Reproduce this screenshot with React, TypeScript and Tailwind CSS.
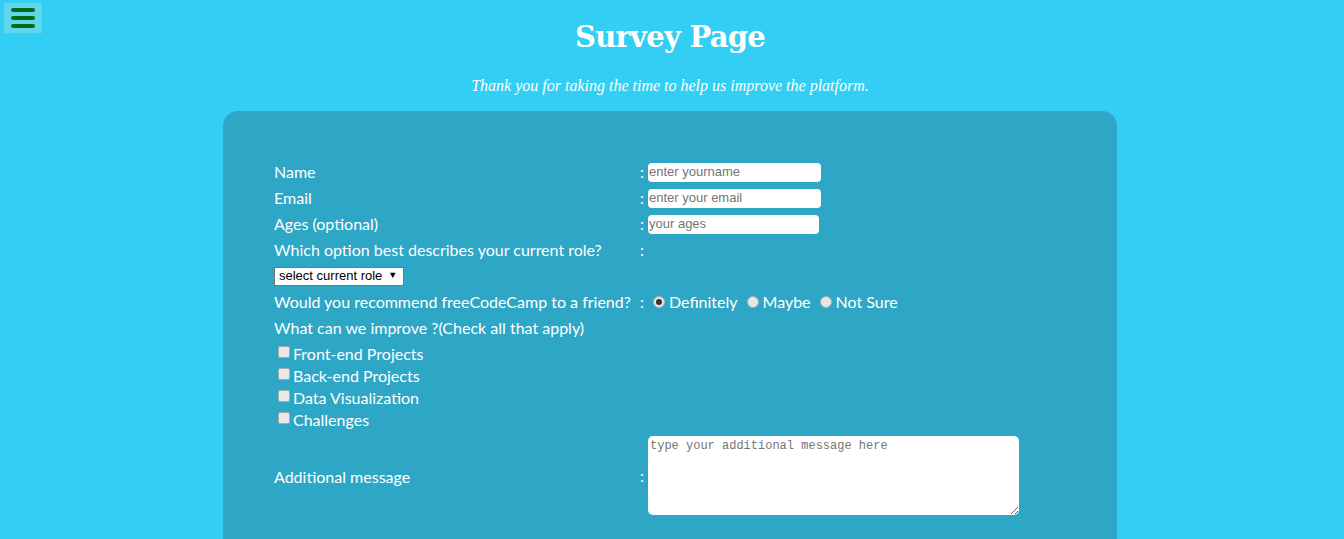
import React from "react";

const Row = ({ label, children }: { label: string; children?: React.ReactNode }) => (
  <div className="flex items-center h-[26px]">
    <div className="w-[366px] shrink-0">{label}</div>
    <span className="w-[8px] shrink-0">:</span>
    {children}
  </div>
);

export default function App() {
  return (
    <div className="min-h-[539px] bg-[#33cef3] text-white font-['Lato',sans-serif] text-[16px] overflow-hidden relative pr-[4px]">
      {/* menu button */}
      <button className="absolute left-[4px] top-[3px] w-[38px] h-[30px] bg-[#5fd6ed] flex flex-col items-center justify-center gap-[4px]">
        <span className="block w-[24px] h-[4px] rounded-full bg-[#066a17]" />
        <span className="block w-[24px] h-[4px] rounded-full bg-[#066a17]" />
        <span className="block w-[24px] h-[4px] rounded-full bg-[#066a17]" />
      </button>

      <h1 className="pt-[18px] text-center text-[29px] leading-[38px] font-bold font-['DejaVu_Serif',serif] tracking-tight">
        Survey Page
      </h1>
      <p className="mt-[20px] text-center italic text-[16px] leading-[20px] font-['Liberation_Serif',serif]">
        Thank you for taking the time to help us improve the platform.
      </p>

      <form className="mx-auto mt-[15px] w-[894px] rounded-t-[15px] bg-[#2ea6c6] pl-[51px] pt-[48px] pb-[30px]">
        <Row label="Name">
          <input
            placeholder="enter yourname"
            className="w-[173px] h-[19px] bg-white rounded-[4px] px-[1px] text-[13px] text-black font-['Liberation_Sans',sans-serif] placeholder:text-[#757575] outline-none"
          />
        </Row>
        <Row label="Email">
          <input
            placeholder="enter your email"
            className="w-[173px] h-[19px] bg-white rounded-[4px] px-[1px] text-[13px] text-black font-['Liberation_Sans',sans-serif] placeholder:text-[#757575] outline-none"
          />
        </Row>
        <Row label="Ages (optional)">
          <input
            placeholder="your ages"
            className="w-[171px] h-[19px] bg-white rounded-[4px] px-[1px] text-[13px] text-black font-['Liberation_Sans',sans-serif] placeholder:text-[#757575] outline-none"
          />
        </Row>
        <Row label="Which option best describes your current role?" />
        <div className="flex items-center h-[26px]">
          <div className="w-[130px] h-[19px] bg-white border border-[#767676] text-black text-[13px] font-['Liberation_Sans',sans-serif] flex items-center pl-[4px] gap-[6px]">
            select current role <span className="text-[9px]">▼</span>
          </div>
        </div>
        <Row label="Would you recommend freeCodeCamp to a friend?">
          <div className="flex items-center ml-[5px]">
            <span className="w-[12px] h-[12px] rounded-full bg-[#e6e6e6] border border-[#adadad] flex items-center justify-center">
              <span className="w-[6px] h-[6px] rounded-full bg-[#333]" />
            </span>
            <span className="ml-[4px]">Definitely</span>
            <span className="ml-[9px] w-[12px] h-[12px] rounded-full bg-[#e6e6e6] border border-[#adadad]" />
            <span className="ml-[4px]">Maybe</span>
            <span className="ml-[9px] w-[12px] h-[12px] rounded-full bg-[#e6e6e6] border border-[#adadad]" />
            <span className="ml-[4px]">Not Sure</span>
          </div>
        </Row>
        <div className="flex items-center h-[26px]">What can we improve ?(Check all that apply)</div>
        <div className="pl-[4px] pt-[2px]">
          {["Front-end Projects", "Back-end Projects", "Data Visualization", "Challenges"].map((c) => (
            <div key={c} className="flex items-center h-[22px]">
              <span className="w-[12px] h-[12px] -mt-[4px] bg-[#e9e9e9] border border-[#a9a9a9] rounded-[2px]" />
              <span className="ml-[3px]">{c}</span>
            </div>
          ))}
        </div>
        <div className="flex items-center mt-[5px]">
          <div className="w-[366px] shrink-0 pt-[2px]">Additional message</div>
          <span className="w-[8px] shrink-0">:</span>
          <textarea
            placeholder="type your additional message here"
            className="w-[371px] h-[79px] bg-white rounded-[5px] px-[2px] py-[1px] text-[12px] text-black font-['Liberation_Mono',monospace] placeholder:text-[#757575] outline-none resize"
          />
        </div>
      </form>
    </div>
  );
}
